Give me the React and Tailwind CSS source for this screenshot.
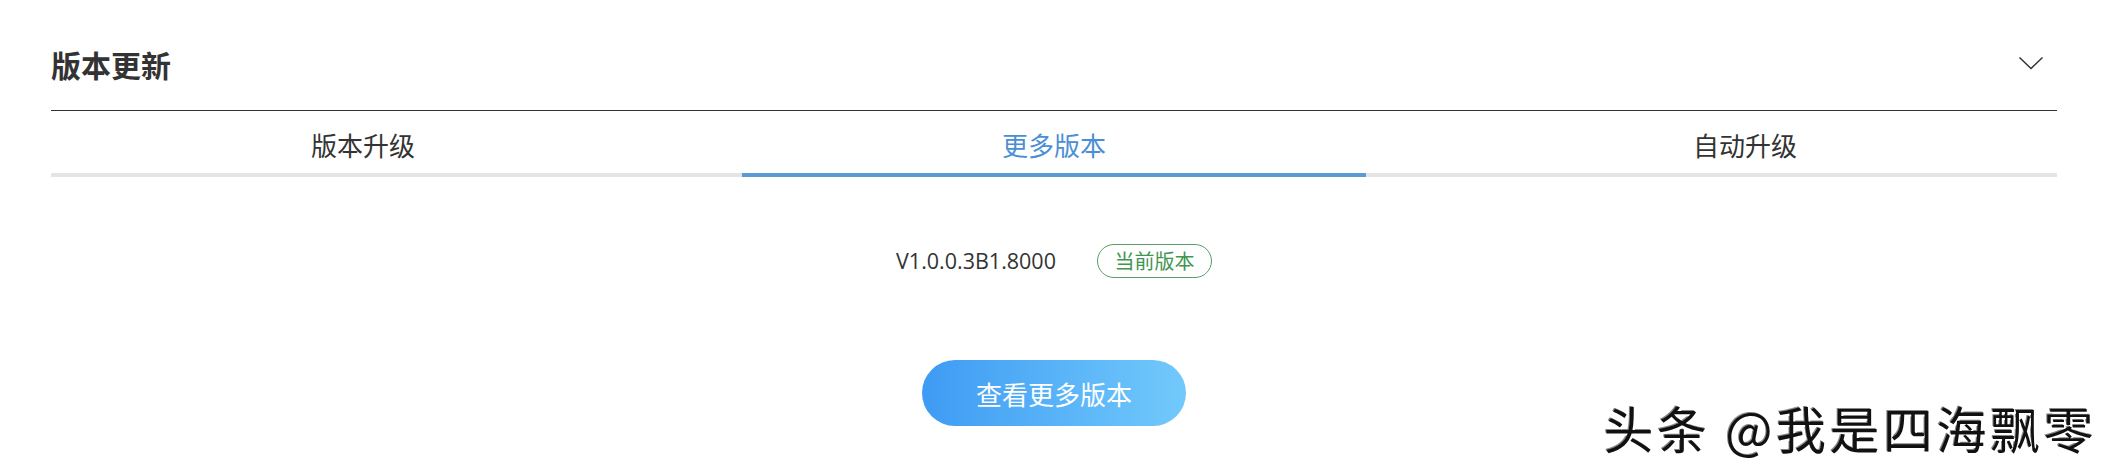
import React, { useState } from "react";

const tabs = ["版本升级", "更多版本", "自动升级"];

function Chevron() {
  return (
    <svg width="26" height="14" viewBox="0 0 26 14" fill="none" className="mr-[13px]">
      <path d="M1.5 1.5 L13 12.5 L24.5 1.5" stroke="#333" strokeWidth="1.5" />
    </svg>
  );
}

function App() {
  const [active, setActive] = useState(1);

  return (
    <div className="relative h-[474px] w-[2107px] overflow-hidden bg-white pl-[51px] pr-[50px] font-['Noto_Sans_CJK_SC','Noto_Sans',sans-serif] text-[#333]">
      {/* header */}
      <div className="flex h-[111px] items-start justify-between border-b border-[#333] pt-[45px]">
        <h1 className="text-[30px] font-bold leading-[38px] text-[#333]">版本更新</h1>
        <div className="flex h-[38px] items-center pb-[3px]">
          <Chevron />
        </div>
      </div>

      {/* tabs */}
      <div className="flex justify-between border-b-4 border-[#e4e4e7]">
        {tabs.map((t, i) => (
          <button
            key={t}
            type="button"
            onClick={() => setActive(i)}
            className={`-mb-1 w-[624px] border-b-4 pt-[16px] pb-[10px] text-center text-[26px] leading-[36px] ${
              i === active ? "border-[#5b9bd5] text-[#4a8fd6]" : "border-transparent text-[#333]"
            }`}
          >
            {t}
          </button>
        ))}
      </div>

      {/* current version */}
      <div className="mt-[67px] flex items-center justify-center gap-[41px]">
        <span className="font-['Open_Sans',sans-serif] text-[21.5px] leading-[34px] text-[#333]">V1.0.0.3B1.8000</span>
        <span className="flex h-[34px] w-[115px] items-center justify-center rounded-full border border-[#5a9d68] text-[20px] leading-none text-[#3f9651]">
          当前版本
        </span>
      </div>

      <div className="mt-[82px] flex justify-center">
        <button
          type="button"
          className="h-[66px] w-[264px] rounded-full bg-linear-to-r from-[#3e9bf3] to-[#72c9fb] text-[26px] text-white"
        >
          查看更多版本
        </button>
      </div>

      {/* watermark */}
      <div className="absolute right-[10px] top-[392px] text-[50px] leading-[70px] tracking-[3.5px] whitespace-pre text-[#111] [text-shadow:2px_2px_0_#fff,-1px_-1px_0_#888]">
        头条 @我是四海飘零
      </div>
    </div>
  );
}

export default App;
